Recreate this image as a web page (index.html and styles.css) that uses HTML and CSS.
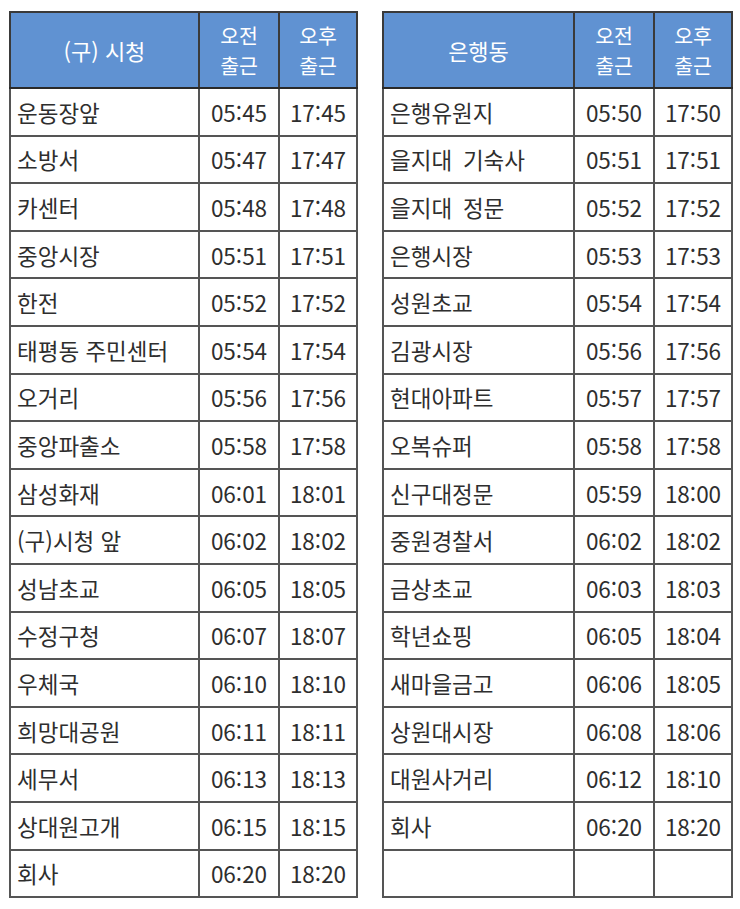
FILE: index.html
```html
<!DOCTYPE html>
<html lang="ko">
<head>
<meta charset="utf-8">
<link rel="stylesheet" href="styles.css">
</head>
<body>
<div class="wrap">
  <table class="sched">
    <colgroup><col class="c-name"><col class="c-time"><col class="c-time2"></colgroup>
    <thead>
      <tr><th class="h-name">(구) 시청</th><th><span class="ln">오전</span><span class="ln">출근</span></th><th><span class="ln">오후</span><span class="ln">출근</span></th></tr>
    </thead>
    <tbody>
      <tr><td class="name">운동장앞</td><td>05:45</td><td>17:45</td></tr>
      <tr><td class="name">소방서</td><td>05:47</td><td>17:47</td></tr>
      <tr><td class="name">카센터</td><td>05:48</td><td>17:48</td></tr>
      <tr><td class="name">중앙시장</td><td>05:51</td><td>17:51</td></tr>
      <tr><td class="name">한전</td><td>05:52</td><td>17:52</td></tr>
      <tr><td class="name">태평동 주민센터</td><td>05:54</td><td>17:54</td></tr>
      <tr><td class="name">오거리</td><td>05:56</td><td>17:56</td></tr>
      <tr><td class="name">중앙파출소</td><td>05:58</td><td>17:58</td></tr>
      <tr><td class="name">삼성화재</td><td>06:01</td><td>18:01</td></tr>
      <tr><td class="name">(구)시청 앞</td><td>06:02</td><td>18:02</td></tr>
      <tr><td class="name">성남초교</td><td>06:05</td><td>18:05</td></tr>
      <tr><td class="name">수정구청</td><td>06:07</td><td>18:07</td></tr>
      <tr><td class="name">우체국</td><td>06:10</td><td>18:10</td></tr>
      <tr><td class="name">희망대공원</td><td>06:11</td><td>18:11</td></tr>
      <tr><td class="name">세무서</td><td>06:13</td><td>18:13</td></tr>
      <tr><td class="name">상대원고개</td><td>06:15</td><td>18:15</td></tr>
      <tr><td class="name">회사</td><td>06:20</td><td>18:20</td></tr>
    </tbody>
  </table>
  <table class="sched right">
    <colgroup><col class="c-name"><col class="c-time"><col class="c-time2"></colgroup>
    <thead>
      <tr><th class="h-name">은행동</th><th><span class="ln">오전</span><span class="ln">출근</span></th><th><span class="ln">오후</span><span class="ln">출근</span></th></tr>
    </thead>
    <tbody>
      <tr><td class="name">은행유원지</td><td>05:50</td><td>17:50</td></tr>
      <tr><td class="name wide">을지대 기숙사</td><td>05:51</td><td>17:51</td></tr>
      <tr><td class="name wide">을지대 정문</td><td>05:52</td><td>17:52</td></tr>
      <tr><td class="name">은행시장</td><td>05:53</td><td>17:53</td></tr>
      <tr><td class="name">성원초교</td><td>05:54</td><td>17:54</td></tr>
      <tr><td class="name">김광시장</td><td>05:56</td><td>17:56</td></tr>
      <tr><td class="name">현대아파트</td><td>05:57</td><td>17:57</td></tr>
      <tr><td class="name">오복슈퍼</td><td>05:58</td><td>17:58</td></tr>
      <tr><td class="name">신구대정문</td><td>05:59</td><td>18:00</td></tr>
      <tr><td class="name">중원경찰서</td><td>06:02</td><td>18:02</td></tr>
      <tr><td class="name">금상초교</td><td>06:03</td><td>18:03</td></tr>
      <tr><td class="name">학년쇼핑</td><td>06:05</td><td>18:04</td></tr>
      <tr><td class="name">새마을금고</td><td>06:06</td><td>18:05</td></tr>
      <tr><td class="name">상원대시장</td><td>06:08</td><td>18:06</td></tr>
      <tr><td class="name">대원사거리</td><td>06:12</td><td>18:10</td></tr>
      <tr><td class="name">회사</td><td>06:20</td><td>18:20</td></tr>
      <tr><td class="name"></td><td></td><td></td></tr>
    </tbody>
  </table>
</div>
</body>
</html>
```
FILE: styles.css
```css
html, body {
  margin: 0;
  padding: 0;
  background: #ffffff;
}
body {
  font-family: "Noto Sans CJK KR", "Noto Sans", sans-serif;
  color: #2e2e2e;
}
.wrap {
  display: flex;
  align-items: flex-start;
  gap: 24px;
  padding: 11px 0 0 9px;
}
.sched {
  border-collapse: collapse;
  table-layout: fixed;
  width: 349px;
  border: 2px solid #2a2a2a;
}
.sched.right {
  width: 351px;
}
.c-name { width: 189px; }
.right .c-name { width: 191px; }
.c-time { width: 80px; }
.c-time2 { width: auto; }
.sched th {
  background: #6092d2;
  color: #ffffff;
  font-weight: 400;
  font-size: 22px;
  line-height: 30px;
  height: 74px;
  padding: 0;
  border: 2px solid #3a3a3a;
  text-align: center;
  vertical-align: middle;
}
.sched th .ln {
  display: block;
  font-size: 20.5px;
  height: 30px;
  line-height: 30px;
}
.sched td {
  height: 47.6px;
  padding: 0;
  font-size: 22.5px;
  line-height: 28px;
  border: 2px solid #555555;
  text-align: center;
  vertical-align: middle;
  box-sizing: border-box;
}
.sched td.name {
  text-align: left;
  padding-left: 6px;
  letter-spacing: 0;
}
.sched td.wide {
  word-spacing: 0.2em;
}
.sched thead th {
  border-bottom-color: #2a2a2a;
}
```
